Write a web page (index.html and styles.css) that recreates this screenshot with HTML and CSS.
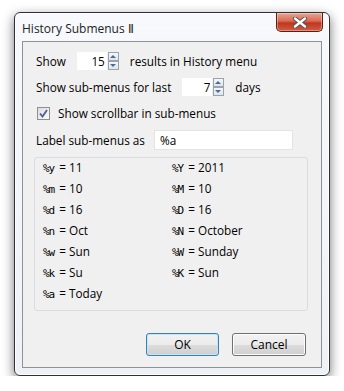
FILE: index.html
```html
<!DOCTYPE html>
<html lang="en">
<head>
  <meta charset="UTF-8" />
  <title>History Submenus Ⅱ</title>
  <link rel="stylesheet" href="styles.css">
</head>
<body>
  <div class="window">
    <div class="titlebar">
      <span class="title">History Submenus Ⅱ</span>
      <button class="close" aria-label="Close">
        <svg width="16" height="11" viewBox="0 0 16 11">
          <path d="M3 1.5 L13 9.5 M13 1.5 L3 9.5" stroke="#505050" stroke-width="4.2" stroke-linecap="round"/>
          <path d="M3 1.5 L13 9.5 M13 1.5 L3 9.5" stroke="#fff" stroke-width="2.4" stroke-linecap="round"/>
        </svg>
      </button>
    </div>

    <div class="client">
      <div class="row row-first">
        <span class="label">Show</span>
        <div class="spin spin-results">
          <input class="spin-input" value="15" />
          <div class="spin-buttons">
            <span class="spin-btn up"></span>
            <span class="spin-btn down"></span>
          </div>
        </div>
        <span class="label after">results in History menu</span>
      </div>

      <div class="row">
        <span class="label">Show sub-menus for last</span>
        <div class="spin spin-days">
          <input class="spin-input" value="7" />
          <div class="spin-buttons">
            <span class="spin-btn up"></span>
            <span class="spin-btn down"></span>
          </div>
        </div>
        <span class="label after">days</span>
      </div>

      <label class="row check-row">
        <span class="checkbox">
          <svg width="9" height="9" viewBox="0 0 9 9">
            <path d="M1 4.5 L3.5 7.5 L8 1" fill="none" stroke="#4a5f97" stroke-width="1.8"/>
          </svg>
        </span>
        <span class="label">Show scrollbar in sub-menus</span>
      </label>

      <div class="row">
        <span class="label">Label sub-menus as</span>
        <input class="text-input" value="%a" />
      </div>

      <div class="codes">
        <div class="code"><span class="key">%y</span>= 11</div>
        <div class="code"><span class="key">%Y</span>= 2011</div>
        <div class="code"><span class="key">%m</span>= 10</div>
        <div class="code"><span class="key">%M</span>= 10</div>
        <div class="code"><span class="key">%d</span>= 16</div>
        <div class="code"><span class="key">%D</span>= 16</div>
        <div class="code"><span class="key">%n</span>= Oct</div>
        <div class="code"><span class="key">%N</span>= October</div>
        <div class="code"><span class="key">%w</span>= Sun</div>
        <div class="code"><span class="key">%W</span>= Sunday</div>
        <div class="code"><span class="key">%k</span>= Su</div>
        <div class="code"><span class="key">%K</span>= Sun</div>
        <div class="code"><span class="key">%a</span>= Today</div>
      </div>

      <div class="actions">
        <button class="btn btn-default">OK</button>
        <button class="btn">Cancel</button>
      </div>
    </div>
  </div>
</body>
</html>
```

FILE: styles.css
```css
* {
  box-sizing: border-box;
}

body {
  margin: 0;
  background: #fff;
  font-family: "Open Sans", "Noto Sans", sans-serif;
  font-size: 11.75px;
  color: #000;
}

.window {
  margin: 12px 0 0 14px;
  width: 316px;
  height: 364px;
  padding: 0 7px 7px 7px;
  border: 1px solid #2e3236;
  border-radius: 6px;
  background: linear-gradient(#f7f9fc, #eef2f7);
  box-shadow: 0 4px 12px rgba(0, 0, 0, 0.55), inset 0 0 0 1px #fff;
}

.titlebar {
  height: 28px;
  display: flex;
  align-items: flex-start;
  justify-content: space-between;
}

.title {
  margin-top: 7px;
  font-size: 12px;
  color: #1e1e1e;
}

.close {
  margin: 0 -1px 0 0;
  width: 47px;
  height: 19px;
  border: 1px solid #5b1e14;
  border-top: none;
  border-radius: 0 0 5px 5px;
  background: linear-gradient(#e8a493 0%, #d96a54 45%, #c0361e 55%, #cf5c45 100%);
  box-shadow: inset 0 0 0 1px rgba(255, 255, 255, 0.35);
  display: flex;
  align-items: center;
  justify-content: center;
  padding: 0;
}

.client {
  border: 1px solid #8e9296;
  background: #f0f0f0;
  height: 327px;
  padding: 9px 13px 0 13px;
}

.row {
  display: flex;
  align-items: center;
  height: 20px;
  margin-bottom: 6px;
}

.label {
  white-space: nowrap;
}

.label.after {
  margin-left: 11px;
}

.spin {
  display: flex;
  align-items: stretch;
  height: 20px;
}

.spin-results {
  margin-left: 10px;
}

.spin-days {
  margin-left: 10px;
}

.spin-input {
  width: 32px;
  height: 20px;
  border: 1px solid #f0f0f0;
  background: #fff;
  font: inherit;
  text-align: right;
  padding: 0 2px 0 0;
  outline: none;
}

.spin-buttons {
  display: flex;
  flex-direction: column;
  width: 11px;
  padding: 1px 0;
}

.spin-btn {
  flex: 1;
  border: 1px solid #9aa2ac;
  background: linear-gradient(#f4f6f9, #dfe5ec);
  position: relative;
}

.spin-btn::after {
  content: "";
  position: absolute;
  left: 1px;
  border-left: 3.5px solid transparent;
  border-right: 3.5px solid transparent;
}

.spin-btn.up::after {
  top: 2px;
  border-bottom: 3px solid #4b6a96;
}

.spin-btn.down::after {
  top: 2px;
  border-top: 3px solid #4b6a96;
}

.check-row {
  padding-left: 1px;
  margin-bottom: 7px;
}

.checkbox {
  width: 13px;
  height: 13px;
  border: 1px solid #8e8f8f;
  background: linear-gradient(135deg, #dcdcdc, #fbfbfb);
  display: flex;
  align-items: center;
  justify-content: center;
  margin-right: 8px;
}

.text-input {
  margin-left: 9px;
  width: 139px;
  height: 20px;
  border: 1px solid #e3e3e3;
  background: #fff;
  font: inherit;
  padding: 0 0 0 5px;
  outline: none;
}

.codes {
  margin: 7px 0 0 -2px;
  width: 274px;
  height: 154px;
  border: 1px solid #d8dde3;
  border-radius: 3px;
  background: #f0f0f0;
  padding: 0 0 0 8px;
  display: grid;
  grid-template-columns: 129px 1fr;
  grid-auto-rows: 21px;
  align-items: start;
  line-height: 18px;
}

.code {
  white-space: nowrap;
}

.key {
  font-family: "DejaVu Sans Mono", monospace;
  font-size: 11px;
  letter-spacing: -1px;
  margin-right: 5px;
}

.actions {
  display: flex;
  justify-content: flex-end;
  gap: 13px;
  margin: 22px 2px 0 0;
}

.btn {
  width: 74px;
  height: 23px;
  border: 1px solid #707070;
  border-radius: 3px;
  background: linear-gradient(#f2f2f2 0%, #ebebeb 50%, #dddddd 51%, #cfcfcf 100%);
  box-shadow: inset 0 0 0 1px #fcfcfc;
  font: inherit;
  font-size: 12px;
  color: #000;
  padding: 0;
}

.btn-default {
  width: 73px;
  border-color: #3c7fb1;
  box-shadow: inset 0 0 0 1px #c4e5f6;
}
```
